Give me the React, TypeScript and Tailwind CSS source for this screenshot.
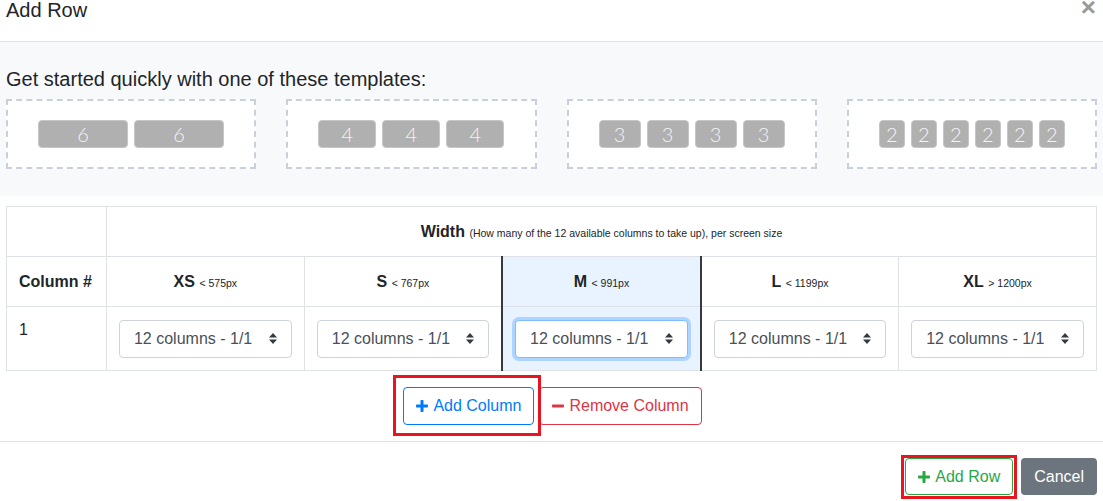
import React from 'react';

const TEMPLATES = [
  [6, 6],
  [4, 4, 4],
  [3, 3, 3, 3],
  [2, 2, 2, 2, 2, 2],
];

const SIZES = [
  { name: 'XS', hint: '< 575px' },
  { name: 'S', hint: '< 767px' },
  { name: 'M', hint: '< 991px', active: true },
  { name: 'L', hint: '< 1199px' },
  { name: 'XL', hint: '> 1200px' },
];

const pillWidth: Record<number, string> = {
  6: 'w-[90px]',
  4: 'w-[58px]',
  3: 'w-[42px]',
  2: 'w-[26px]',
};

function Caret() {
  return (
    <svg width="8" height="11" viewBox="0 0 8 11" className="shrink-0">
      <path d="M4 0 L8 4.5 L0 4.5 Z" fill="#343a40" />
      <path d="M0 6.5 L8 6.5 L4 11 Z" fill="#343a40" />
    </svg>
  );
}

function PlusIcon({ color }: { color: string }) {
  return (
    <svg width="12" height="12" viewBox="0 0 12 12" className="shrink-0">
      <rect x="4.5" y="0" width="3" height="12" rx="0.8" fill={color} />
      <rect x="0" y="4.5" width="12" height="3" rx="0.8" fill={color} />
    </svg>
  );
}

function FakeSelect({ focused }: { focused?: boolean }) {
  return (
    <div
      className={
        focused
          ? 'h-[38px] w-full rounded-[4px] border border-[#80bdff] bg-white px-[14px] flex items-center justify-between shadow-[0_0_0_3px_rgba(0,123,255,0.25)]'
          : 'h-[38px] w-full rounded-[4px] border border-[#ced4da] bg-white px-[14px] flex items-center justify-between'
      }
    >
      <span className="text-[16px] text-[#495057]">12 columns - 1/1</span>
      <Caret />
    </div>
  );
}

export default function App() {
  return (
    <div className="w-[1103px] h-[501px] overflow-hidden bg-white text-[#212529] font-['Liberation_Sans',Arial,sans-serif]">
      {/* Header */}
      <div className="h-[42px] border-b border-[#dee2e6] flex justify-between px-[6px]">
        <div className="text-[20px] leading-[20px]">Add Row</div>
        <div className="text-[26px] leading-[14px] font-bold text-[#9a9a9a] pr-[1px]">×</div>
      </div>

      {/* Templates */}
      <div className="bg-[#f8f9fb] px-[6px] pt-[25px] pb-[27px]">
        <div className="text-[20px] leading-[24px]">Get started quickly with one of these templates:</div>
        <div className="mt-[8px] grid grid-cols-4 gap-[30px]">
          {TEMPLATES.map((t, i) => (
            <div
              key={i}
              className="h-[70px] bg-white border-2 border-dashed border-[#c8d1db] flex items-center justify-center gap-[6px]"
            >
              {t.map((n, j) => (
                <div
                  key={j}
                  className={`${pillWidth[n]} h-[28px] rounded-[4px] bg-[#b0b0b0] border border-[#c6c6c6] flex items-center justify-center text-[20px] font-light text-[#f4f4f4] font-['Lato',sans-serif]`}
                >
                  {n}
                </div>
              ))}
            </div>
          ))}
        </div>
      </div>

      {/* Table */}
      <div className="px-[6px] mt-[10px]">
        <table className="w-full border-collapse text-[16px]">
          <tbody>
            <tr className="h-[50px]">
              <td className="w-[100px] border border-[#dee2e6]"></td>
              <td colSpan={5} className="border border-[#dee2e6] text-center">
                <span className="font-bold">Width</span>{' '}
                <span className="text-[10.5px]">(How many of the 12 available columns to take up), per screen size</span>
              </td>
            </tr>
            <tr className="h-[50px]">
              <td className="border border-[#dee2e6] px-[12px] font-bold">Column #</td>
              {SIZES.map((s) => (
                <td
                  key={s.name}
                  className={
                    s.active
                      ? 'w-[199px] border-y border-[#dee2e6] border-x-2 border-x-[#343a40] bg-[#e8f3ff] text-center'
                      : 'w-[198px] border border-[#dee2e6] text-center'
                  }
                >
                  <span className="font-bold">{s.name}</span>{' '}
                  <span className="text-[10.5px]">{s.hint}</span>
                </td>
              ))}
            </tr>
            <tr className="h-[64px]">
              <td className="border border-[#dee2e6] px-[12px] pt-[11px] align-top">1</td>
              {SIZES.map((s) => (
                <td
                  key={s.name}
                  className={
                    s.active
                      ? 'border-y border-[#dee2e6] border-x-2 border-x-[#343a40] bg-[#e8f3ff] px-[12px]'
                      : 'border border-[#dee2e6] px-[12px]'
                  }
                >
                  <FakeSelect focused={s.active} />
                </td>
              ))}
            </tr>
          </tbody>
        </table>
      </div>

      {/* Column buttons */}
      <div className="mt-[16px] h-[38px] flex justify-center gap-[5px] pl-[2px]">
        <div className="relative">
          <button className="h-[38px] px-[12px] rounded-[4px] border border-[#007bff] text-[#007bff] text-[16px] flex items-center gap-[5px]">
            <PlusIcon color="#007bff" />
            Add Column
          </button>
          <div className="absolute -left-[10px] -right-[7px] -top-[12px] -bottom-[11px] border-[3px] border-[#e8141f] pointer-events-none" />
        </div>
        <button className="h-[38px] px-[12px] rounded-[4px] border border-[#dc3545] text-[#dc3545] text-[16px] flex items-center gap-[5px]">
          <svg width="12" height="12" viewBox="0 0 12 12" className="shrink-0">
            <rect x="0" y="4.5" width="12" height="3" rx="0.8" fill="#dc3545" />
          </svg>
          Remove Column
        </button>
      </div>

      {/* Footer */}
      <div className="mt-[16px] border-t border-[#dee2e6] pt-[16px] pr-[6px] flex justify-end gap-[8px]">
        <div className="relative">
          <button className="h-[37px] px-[12px] rounded-[4px] border border-[#28a745] text-[#28a745] text-[16px] flex items-center gap-[5px]">
            <PlusIcon color="#28a745" />
            Add Row
          </button>
          <div className="absolute -left-[4px] -right-[4px] -top-[3px] -bottom-[4px] border-[3px] border-[#e8141f] pointer-events-none" />
        </div>
        <button className="h-[37px] px-[13px] rounded-[4px] bg-[#6c757d] text-white text-[16px]">Cancel</button>
      </div>
    </div>
  );
}
